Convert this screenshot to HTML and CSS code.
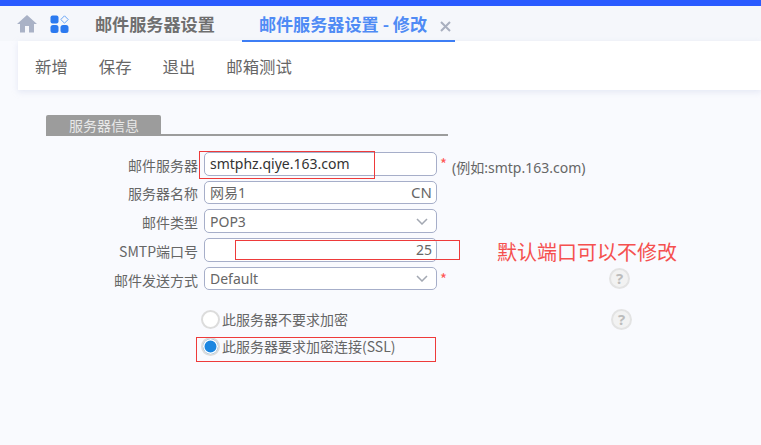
FILE: index.html
```html
<!DOCTYPE html>
<html lang="zh">
<head>
<meta charset="utf-8">
<title>邮件服务器设置</title>
<link rel="stylesheet" href="styles.css">
</head>
<body>
<div class="topline"></div>
<header class="tabs">
  <svg class="home" width="20" height="18" viewBox="0 0 20 18"><path d="M10 0 L20 9 H17 V17.500 H12 V11 H8 V17.500 H3 V9 H0 Z" fill="#a9b2c6"/></svg>
  <svg class="apps" width="19" height="18" viewBox="0 0 19 18">
    <rect x="0.500" y="0.500" width="8" height="8" rx="2" fill="#2b7af0"/>
    <rect x="0.500" y="10" width="8" height="8" rx="2.500" fill="#2b7af0"/>
    <rect x="10.500" y="10" width="8" height="8" rx="2.500" fill="#2b7af0"/>
    <path d="M14.500 0.800 L18.200 4.500 L14.500 8.200 L10.800 4.500 Z" fill="none" stroke="#6aa5f5" stroke-width="1"/>
  </svg>
  <span class="tab">邮件服务器设置</span>
  <span class="tab active">邮件服务器设置 - 修改<svg class="close" width="11" height="11" viewBox="0 0 11 11"><path d="M1 1 L10 10 M10 1 L1 10" stroke="#a9b0bf" stroke-width="2"/></svg></span>
</header>
<nav class="toolbar">
  <span>新增</span><span>保存</span><span>退出</span><span>邮箱测试</span>
</nav>
<main class="content">
  <div class="section"><span class="section-title">服务器信息</span></div>
  <div class="form">
    <label>邮件服务器</label>
    <div class="field big">smtphz.qiye.163.com</div>
    <div class="after"><span class="star">*</span><span class="hint">(例如:smtp.163.com)</span></div>

    <label>服务器名称</label>
    <div class="field"><span>网易1</span><span class="end">CN</span></div>
    <div class="after"></div>

    <label>邮件类型</label>
    <div class="field"><span>POP3</span><svg class="chev" width="12" height="7" viewBox="0 0 12 7"><path d="M1 1 L6 6 L11 1" fill="none" stroke="#a3a8b2" stroke-width="1.500"/></svg></div>
    <div class="after"></div>

    <label>SMTP端口号</label>
    <div class="field right">25</div>
    <div class="after"></div>

    <label>邮件发送方式</label>
    <div class="field"><span>Default</span><svg class="chev" width="12" height="7" viewBox="0 0 12 7"><path d="M1 1 L6 6 L11 1" fill="none" stroke="#a3a8b2" stroke-width="1.500"/></svg></div>
    <div class="after"><span class="star">*</span><span class="help first">?</span></div>
  </div>
  <div class="options">
    <div class="option"><span class="radio"></span><span>此服务器不要求加密</span><span class="help second">?</span></div>
    <div class="option"><span class="radio on"></span><span>此服务器要求加密连接(SSL)</span></div>
  </div>
</main>
<div class="mark m1"></div>
<div class="mark m2"></div>
<div class="mark m3"></div>
<div class="note">默认端口可以不修改</div>
</body>
</html>
```
FILE: styles.css
```css
* { box-sizing: border-box; }
html, body { margin: 0; height: 100%; }
body {
  position: relative;
  width: 761px;
  height: 445px;
  overflow: hidden;
  background: #f9fafe;
  color: #666;
  font-family: "Noto Sans CJK SC", "Noto Sans", sans-serif;
}
.topline { height: 6px; background: #2a5bff; }
.tabs {
  height: 35px;
  display: flex;
  align-items: center;
  background: #f5f7fb;
  padding-left: 17px;
}
.home { flex: none; }
.apps { flex: none; margin-left: 13px; }
.tab {
  font-size: 17.140px;
  font-weight: 700;
  color: #6f6f6f;
  margin-left: 26px;
  line-height: 35px;
  white-space: nowrap;
}
.tab.active {
  margin-left: 27px;
  width: 213px;
  height: 36px;
  padding-left: 17px;
  color: #4f8bf5;
  border-bottom: 2px solid #3d7ef5;
  margin-top: 1px;
}
.close { margin-left: 13px; vertical-align: -1px; }
.toolbar {
  margin-left: 18px;
  height: 49px;
  background: #fff;
  display: flex;
  align-items: center;
  gap: 31px;
  padding-left: 17px;
  font-size: 16.400px;
  color: #666;
  box-shadow: 0 2px 6px rgba(190, 198, 225, .35);
}
.content { padding: 25px 0 0 46px; }
.section {
  width: 402px;
  height: 21px;
  border-bottom: 2px solid #9c9c9c;
}
.section-title {
  display: block;
  width: 115px;
  height: 21px;
  background: #9c9c9c;
  color: #e8e8e8;
  border-radius: 2px 2px 0 0;
  font-size: 14px;
  line-height: 21px;
  padding-left: 23px;
}
.form {
  margin-top: 16px;
  display: grid;
  grid-template-columns: 152px 233px 1fr;
  grid-auto-rows: 23.500px;
  row-gap: 5.200px;
  column-gap: 6px;
  align-items: center;
  font-size: 14px;
}
.form label { text-align: right; color: #666; white-space: nowrap; padding-top: 2px; }
.field {
  height: 23.500px;
  border: 1px solid #a6aec9;
  border-radius: 5px;
  background: #fff;
  display: flex;
  align-items: center;
  justify-content: space-between;
  padding: 0 4px 0 5px;
  font-family: "Noto Sans", "Noto Sans CJK SC", sans-serif;
  font-size: 14px;
  color: #666;
  white-space: nowrap;
}
.field.big { color: #333; font-size: 14px; }
.field.right { justify-content: flex-end; }
.end { font-size: 15px; }
.chev { margin-right: 4px; }
.after { position: relative; height: 23px; display: flex; align-items: center; }
.star { color: #f55; font-size: 15px; margin-top: 0; margin-left: -3px; }
.hint { margin-left: 5px; margin-top: 6px; font-size: 14px; color: #666; font-family: "Noto Sans", "Noto Sans CJK SC", sans-serif; }
.help {
  position: absolute;
  width: 21px;
  height: 21px;
  border: 2px solid #e3e3e3;
  border-radius: 50%;
  background: #f2f2f2;
  color: #bcbcbc;
  font-size: 15px;
  font-weight: 700;
  line-height: 17px;
  text-align: center;
  font-family: "Noto Sans", sans-serif;
}
.help.first { left: 166px; top: 1px; }
.help.second { left: 611px; top: 309px; }
.options {
  margin-top: 19px;
  margin-left: 155px;
  display: flex;
  flex-direction: column;
  gap: 7px;
  font-size: 14px;
}
.option { display: flex; align-items: center; height: 20px; color: #666; }
.option > span:nth-child(2) { margin-left: 2px; }
.radio {
  width: 19px;
  height: 19px;
  border-radius: 50%;
  border: 2px solid #dcdcdc;
  background: #fff;
  flex: none;
}
.radio.on { background: #1c86e0; box-shadow: inset 0 0 0 1.500px #fff; }
.mark { position: absolute; border: 1px solid #ee3a3a; }
.m1 { left: 199px; top: 151px; width: 176px; height: 28px; }
.m2 { left: 235px; top: 240px; width: 225px; height: 20px; }
.m3 { left: 196px; top: 337px; width: 240px; height: 25px; }
.note {
  position: absolute;
  left: 497px;
  top: 238px;
  font-size: 20px;
  line-height: 28px;
  color: #f5504f;
  white-space: nowrap;
}
```
